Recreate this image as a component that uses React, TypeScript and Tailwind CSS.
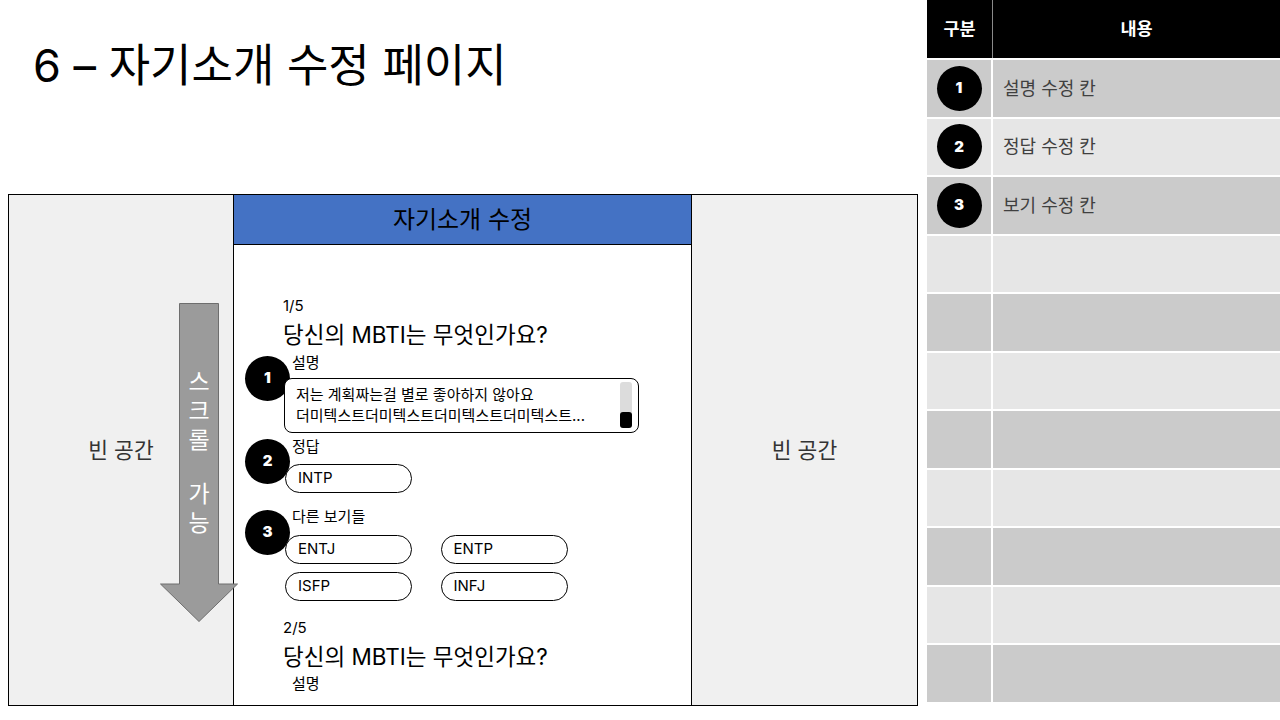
const font = "font-['Inter','Noto_Sans_CJK_KR',sans-serif]";

function Badge({ n, className = "" }: { n: number; className?: string }) {
  return (
    <div
      className={`flex h-[45px] w-[45px] items-center justify-center rounded-full bg-black text-[15px] font-black text-white ${className}`}
    >
      {n}
    </div>
  );
}

function Pill({ label }: { label: string }) {
  return (
    <div className="relative z-10 flex h-[29px] w-[127px] items-center rounded-full border border-black bg-white pl-[12px] text-[15px] text-black">
      {label}
    </div>
  );
}

function ScrollArrow() {
  return (
    <div className="absolute left-[151px] top-[108px] z-20 h-[319px] w-[78px]">
      <svg width="78" height="319" viewBox="0 0 78 319" className="absolute inset-0">
        <path
          d="M19.5 0.5 H58.5 V281 H77.5 L39 318.5 L0.5 281 H19.5 Z"
          fill="#9b9b9b"
          stroke="#6e6e6e"
          strokeWidth="1"
        />
      </svg>
      <div className="absolute left-[19px] top-[65px] flex w-[40px] flex-col items-center text-[23px] leading-[29px] text-white">
        <span>스</span>
        <span>크</span>
        <span>롤</span>
        <span className="h-[25px]" />
        <span>가</span>
        <span>능</span>
      </div>
    </div>
  );
}

function Question({ idx, children }: { idx: string; children?: React.ReactNode }) {
  return (
    <div>
      <p className="text-[15px] leading-[20px] text-black">{idx}</p>
      <h3 className="mt-[4px] text-[22.5px] leading-[30px] text-black">당신의 MBTI는 무엇인가요?</h3>
      {children}
    </div>
  );
}

const rows = [
  { n: 1, text: "설명 수정 칸" },
  { n: 2, text: "정답 수정 칸" },
  { n: 3, text: "보기 수정 칸" },
  { n: 0, text: "" },
  { n: 0, text: "" },
  { n: 0, text: "" },
  { n: 0, text: "" },
  { n: 0, text: "" },
  { n: 0, text: "" },
  { n: 0, text: "" },
  { n: 0, text: "" },
];

export default function App() {
  return (
    <div className={`flex h-[720px] w-[1280px] overflow-hidden bg-white ${font}`}>
      {/* left side: title + mockup */}
      <div className="flex w-[927px] flex-col">
        <div className="h-[194px] pl-[33px] pt-[38px]">
          <h1 className="text-[45px] leading-[56px] text-black">6 – 자기소개 수정 페이지</h1>
        </div>

        <div className="ml-[8px] flex h-[512px] w-[910px] border border-black">
          <div className="relative flex w-[224px] items-center justify-center bg-[#f0f0f0]">
            <span className="text-[21.5px] text-[#333]">빈 공간</span>
            <ScrollArrow />
          </div>

          <div className="flex flex-1 flex-col overflow-hidden border-x border-black bg-white">
            <div className="flex h-[50px] shrink-0 items-center justify-center border-b border-black bg-[#4472c4]">
              <span className="text-[24px] text-black">자기소개 수정</span>
            </div>

            <div className="pl-[49px] pt-[51px]">
              <Question idx="1/5">
                <div className="relative mt-[4px]">
                  <Badge n={1} className="absolute -left-[38px] top-[2px]" />
                  <p className="ml-[9px] text-[15px] leading-[18px]">설명</p>
                  <div className="relative z-10 ml-[1px] mt-[6px] h-[55px] w-[355px] rounded-[8px] border border-black bg-white pl-[11px] pt-[5px] text-[15px] leading-[21px] text-black">
                    <p>저는 계획짜는걸 별로 좋아하지 않아요</p>
                    <p>더미텍스트더미텍스트더미텍스트더미텍스트...</p>
                    <div className="absolute bottom-[4px] right-[6px] top-[3px] flex w-[12px] flex-col justify-end rounded-[3px] bg-[#dcdcdc]">
                      <div className="h-[16px] rounded-[3px] bg-black" />
                    </div>
                  </div>
                </div>

                <div className="relative mt-[5px]">
                  <Badge n={2} className="absolute -left-[38px] top-[1px]" />
                  <p className="ml-[9px] text-[15px] leading-[18px]">정답</p>
                  <div className="ml-[2px] mt-[8px]">
                    <Pill label="INTP" />
                  </div>
                </div>

                <div className="relative mt-[15px]">
                  <Badge n={3} className="absolute -left-[38px] top-[2px]" />
                  <p className="ml-[9px] text-[15px] leading-[18px]">다른 보기들</p>
                  <div className="ml-[2px] mt-[9px] grid w-[283px] grid-cols-2 gap-x-[28px] gap-y-[8px]">
                    <Pill label="ENTJ" />
                    <Pill label="ENTP" />
                    <Pill label="ISFP" />
                    <Pill label="INFJ" />
                  </div>
                </div>
              </Question>

              <div className="mt-[17px]">
                <Question idx="2/5">
                  <p className="ml-[9px] mt-[3px] text-[15px] leading-[18px]">설명</p>
                </Question>
              </div>
            </div>
          </div>

          <div className="flex w-[225px] items-center justify-center bg-[#f0f0f0]">
            <span className="text-[21.5px] text-[#333]">빈 공간</span>
          </div>
        </div>
      </div>

      {/* right side: legend table */}
      <div className="flex w-[353px] flex-col">
        <div className="flex h-[58px] bg-black text-[17.5px] font-bold text-white">
          <div className="flex w-[66px] items-center justify-center border-r border-[#8a8a8a]">구분</div>
          <div className="flex flex-1 items-center justify-center">내용</div>
        </div>
        {rows.map((r, i) => (
          <div
            key={i}
            className={`mt-[2px] flex h-[56.5px] ${i % 2 === 0 ? "bg-[#cbcbcb]" : "bg-[#e6e6e6]"}`}
          >
            <div className="flex w-[66px] items-center justify-center border-r-2 border-white">
              {r.n > 0 && <Badge n={r.n} />}
            </div>
            <div className="flex flex-1 items-center pl-[10px] text-[18px] text-[#404040]">{r.text}</div>
          </div>
        ))}
      </div>
    </div>
  );
}
